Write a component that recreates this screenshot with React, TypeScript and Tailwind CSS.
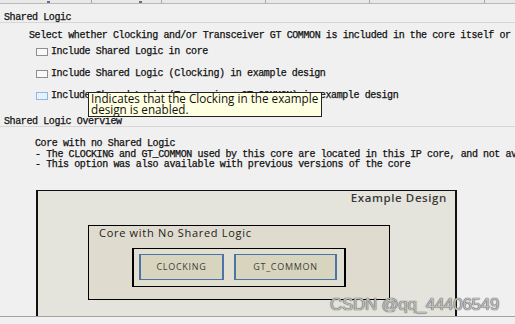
import React from 'react';

const mono =
  "font-['Liberation_Mono',monospace] text-[10px] tracking-[-0.4px] text-[#111] [-webkit-text-stroke:0.25px_#111] whitespace-nowrap";
const sans = "font-['Open_Sans',sans-serif]";

const Checkbox: React.FC<{ hover?: boolean }> = ({ hover }) => (
  <div
    className={
      hover
        ? 'w-[12px] h-[8px] border border-[#86b8ec] bg-[#e6f1fc]'
        : 'w-[12px] h-[8px] border border-[#8e8e8e] bg-[#f9f9f9]'
    }
  />
);

const Option: React.FC<{ label: string; hover?: boolean }> = ({ label, hover }) => (
  <div className="flex items-center h-[11px] pl-[36px] gap-[3px]">
    <Checkbox hover={hover} />
    <span className={`${mono} leading-[10px]`}>{label}</span>
  </div>
);

const SectionHeader: React.FC<{ title: string }> = ({ title }) => (
  <div className="border-b border-[#d6d6d6] pl-[4px]">
    <div className={`${mono} leading-[9px] h-[9px]`}>{title}</div>
  </div>
);

const BlockBox: React.FC<{ label: string; width: string }> = ({ label, width }) => (
  <div
    className={`${width} h-[26px] border-x-2 border-y-[1.5px] border-[#4d72a8] bg-[#d8d5bf] flex items-center justify-center ${sans} text-[9px] tracking-[0.7px] text-[#3d3d3d]`}
  >
    {label}
  </div>
);

export default function App() {
  const headerCells = [92, 70, 104, 104, 115];
  return (
    <div className="relative w-[515px] h-[324px] bg-[#f0f0f0] overflow-hidden flex flex-col">
      <div className="flex-1 overflow-hidden">
        {/* clipped table header row */}
        <div className="flex h-[4px] bg-[#e8e8e8] border-b border-[#b8b8b8]">
          {headerCells.map((w, i) => (
            <div key={i} style={{ width: w }} className="relative h-full border-r border-[#a8a8a8]">
              {i < 2 && <div className="absolute left-[47px] bottom-0 w-[3px] h-[2px] bg-[#6a6a8a]" />}
            </div>
          ))}
        </div>

        <div className="pt-[9px]">
          <SectionHeader title="Shared Logic" />
        </div>

        <div className={`${mono} leading-[10px] mt-[8px] pl-[29px]`}>
          Select whether Clocking and/or Transceiver GT COMMON is included in the core itself or in the example design
        </div>

        <div className="mt-[5px] flex flex-col gap-[11px]">
          <Option label="Include Shared Logic in core" />
          <Option label="Include Shared Logic (Clocking) in example design" />
          <Option label="Include Shared Logic (Transceiver GT_COMMON) in example design" hover />
        </div>

        <div className="mt-[16px]">
          <SectionHeader title="Shared Logic Overview" />
        </div>

        <div className={`${mono} leading-[10.5px] mt-[12px] pl-[35px]`}>
          <div>Core with no Shared Logic</div>
          <div>- The CLOCKING and GT_COMMON used by this core are located in this IP core, and not available to other cores</div>
          <div>- This option was also available with previous versions of the core</div>
        </div>

        {/* diagram */}
        <div className="mt-[19.5px] ml-[36px] w-[421px] h-[200px] border-x-2 border-y border-[#111] bg-[#e5e4dc]">
          <div className={`h-[14px] leading-[14px] text-right pr-[8px] ${sans} font-semibold text-[11.5px] tracking-[0.6px] text-[#3a3a3a]`}>
            Example Design
          </div>
          <div className="mt-[20px] ml-[50px] w-[302px] h-[75px] border border-black bg-[#dfdccf]">
            <div className={`h-[14px] leading-[14px] pl-[10px] ${sans} font-medium text-[11px] tracking-[0.7px] text-[#222]`}>
              Core with No Shared Logic
            </div>
            <div className="mt-[8px] ml-[43px] w-[214px] h-[39px] border-x-2 border-y-[1.5px] border-black bg-[#e1ded2] flex gap-[10px] pl-[5px] pt-[4.5px]">
              <BlockBox label="CLOCKING" width="w-[85px]" />
              <BlockBox label="GT_COMMON" width="w-[103px]" />
            </div>
          </div>
        </div>
      </div>

      <div className="h-[8px] border-t border-[#a3a3a3] bg-[#f0f0f0]" />

      {/* tooltip */}
      <div className="absolute left-[88px] top-[92px] w-[234px] h-[25px] border border-[#222] bg-[#ffffe1] pl-[2px]">
        <div className={`${sans} text-[11.7px] leading-[11px] text-[#111] whitespace-nowrap`}>
          Indicates that the Clocking in the example
        </div>
        <div className={`${sans} text-[11.7px] leading-[11px] text-[#111] whitespace-nowrap`}>
          design is enabled.
        </div>
      </div>

      {/* watermark */}
      <div className="absolute left-[330px] top-[295px] font-['Liberation_Sans',sans-serif] text-[17px] leading-[20px] tracking-[-0.3px] text-[#bdbdbd] [text-shadow:0_0_1px_#555,0_0_1px_#555] whitespace-nowrap">
        CSDN @qq_44406549
      </div>
    </div>
  );
}
